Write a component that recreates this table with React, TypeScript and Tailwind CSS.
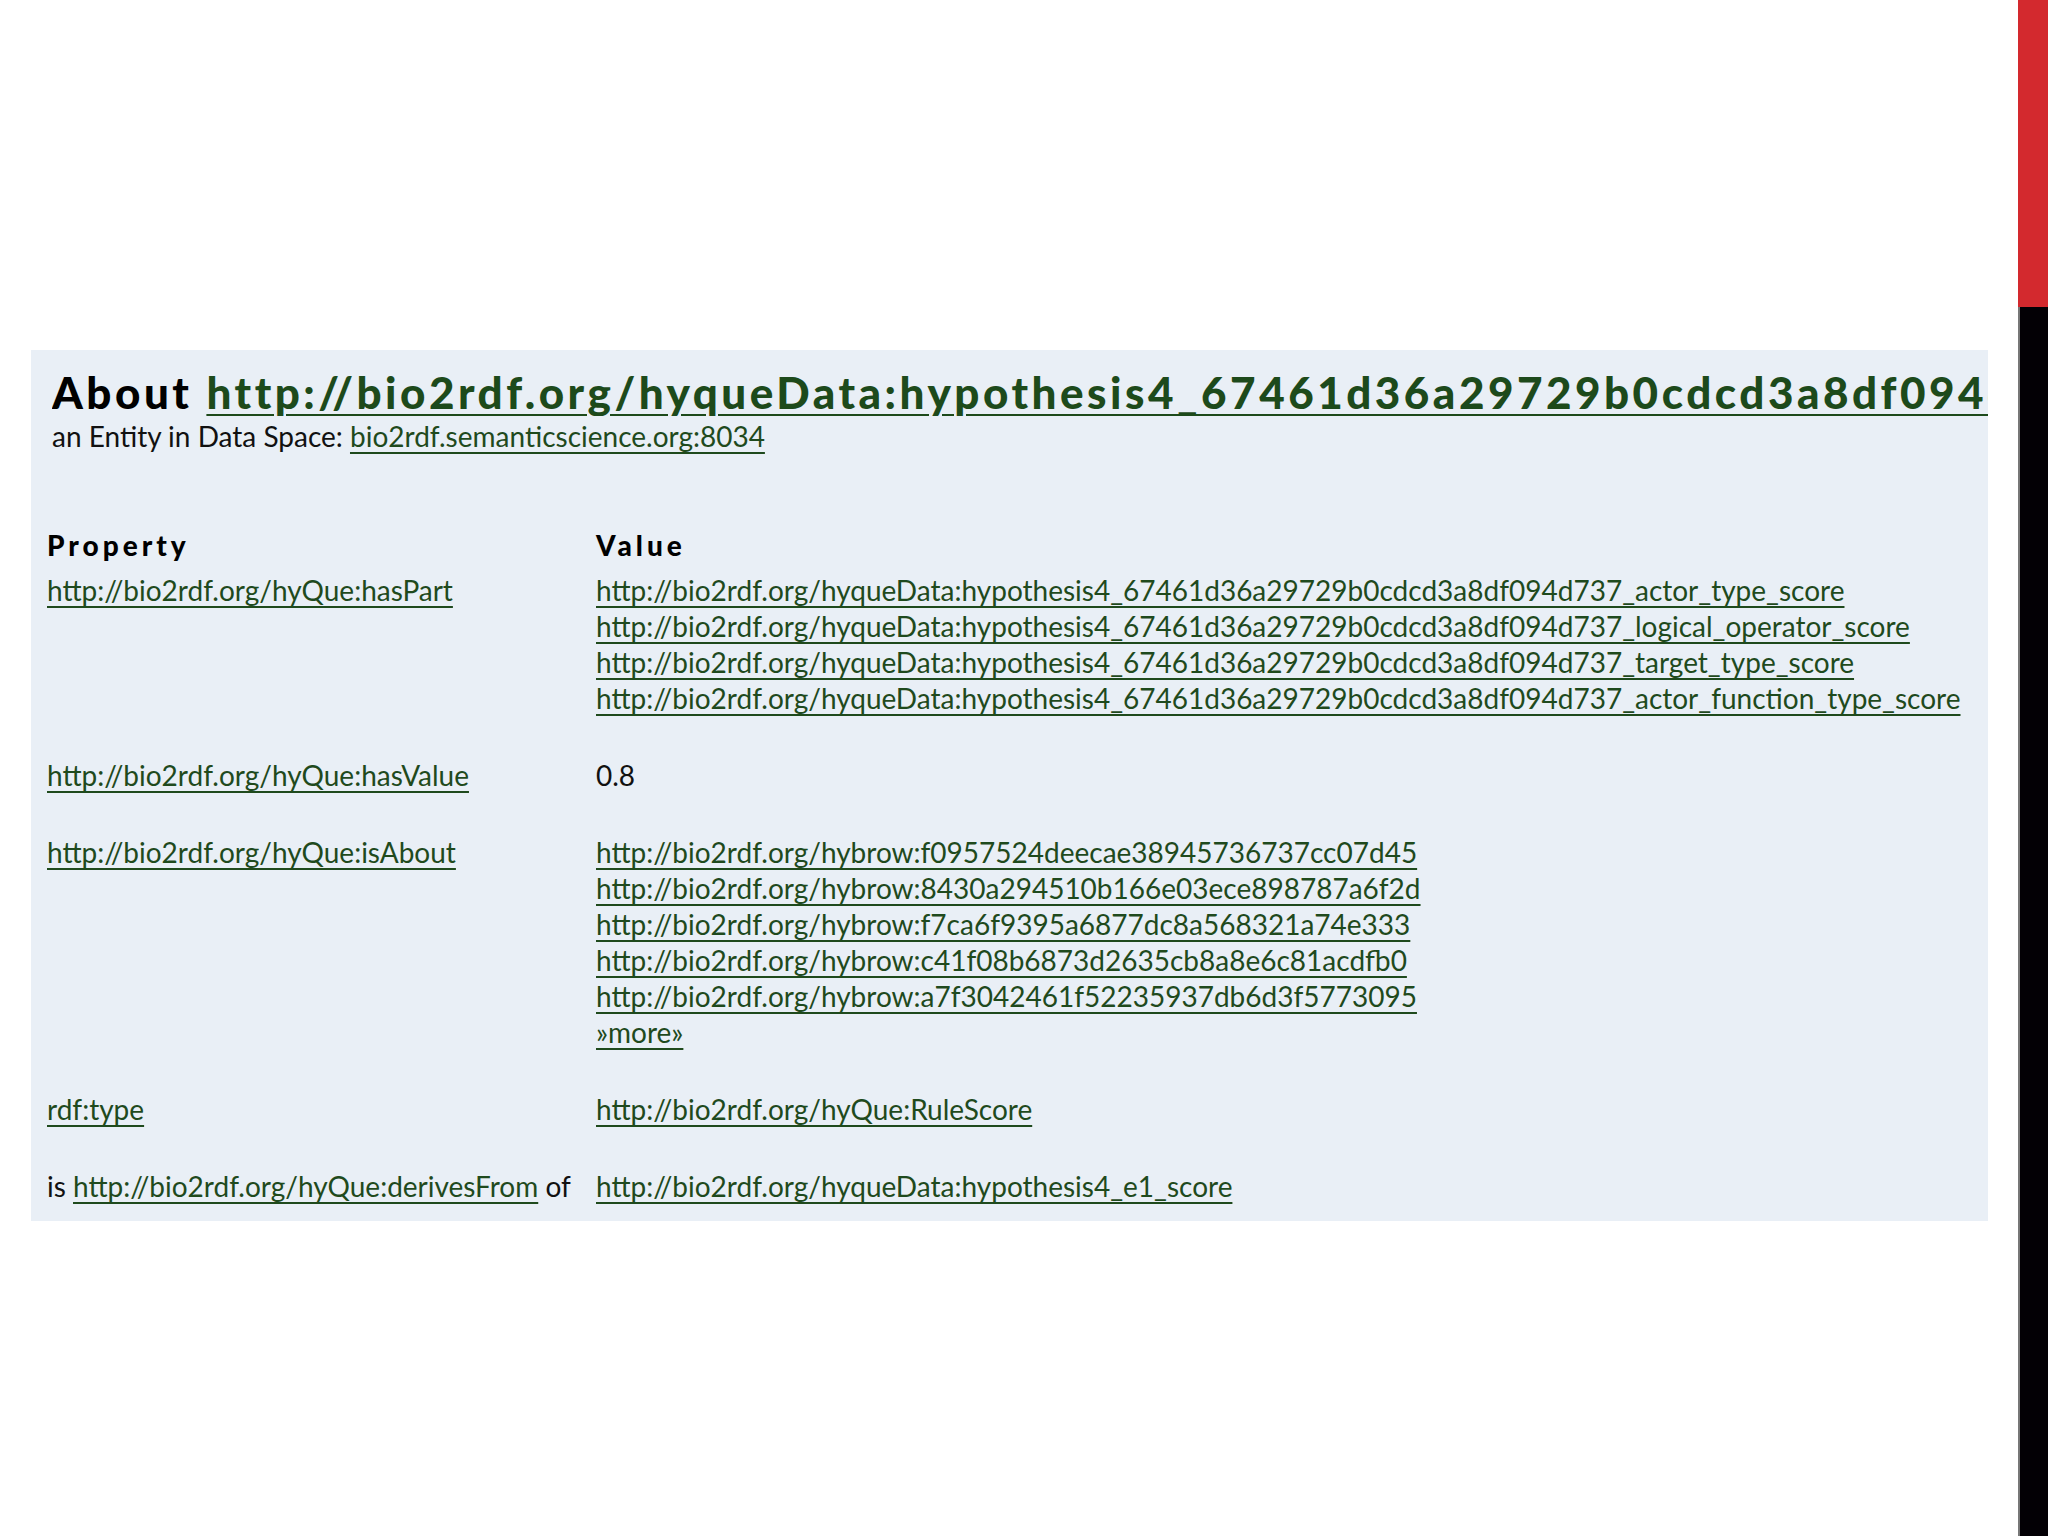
const font = { fontFamily: 'Lato, "Open Sans", sans-serif' }

const base = 'http://bio2rdf.org/hyqueData:hypothesis4_67461d36a29729b0cdcd3a8df094d737_'

const partValues = [
  base + 'actor_type_score',
  base + 'logical_operator_score',
  base + 'target_type_score',
  base + 'actor_function_type_score',
]

const aboutValues = [
  'http://bio2rdf.org/hybrow:f0957524deecae38945736737cc07d45',
  'http://bio2rdf.org/hybrow:8430a294510b166e03ece898787a6f2d',
  'http://bio2rdf.org/hybrow:f7ca6f9395a6877dc8a568321a74e333',
  'http://bio2rdf.org/hybrow:c41f08b6873d2635cb8a8e6c81acdfb0',
  'http://bio2rdf.org/hybrow:a7f3042461f52235937db6d3f5773095',
]

function Link({ children }: { children: React.ReactNode }) {
  return (
    <a className="text-[#1f4a1d] underline decoration-2 underline-offset-[5px] decoration-[#1f4a1d]">
      {children}
    </a>
  )
}

function Row({ prop, values }: { prop: React.ReactNode; values: React.ReactNode[] }) {
  return (
    <div className="flex">
      <div className="w-[549px] shrink-0 whitespace-nowrap">{prop}</div>
      <div className="flex flex-col whitespace-nowrap">
        {values.map((v, i) => (
          <div key={i}>{v}</div>
        ))}
      </div>
    </div>
  )
}

export default function App() {
  return (
    <div className="flex min-h-[1536px] bg-white" style={font}>
      <div className="min-w-0 flex-1 pt-[350px] pl-[31px] pr-[30px]">
        <div className="h-[871px] overflow-hidden bg-[#e9eff6] pl-[16px] text-[28px] leading-[36px] text-[#111]">
          {/* heading, cut at the panel edge like the source page */}
          <div className="mt-[18px] ml-[5px] overflow-hidden whitespace-nowrap text-[44px] leading-[48px] font-black tracking-[3.5px] text-black">
            About{' '}
            <a className="text-[#1d4a1b] underline decoration-[3px] underline-offset-[5px]">
              http://bio2rdf.org/hyqueData:hypothesis4_67461d36a29729b0cdcd3a8df094d737_logical_operator_score
            </a>
          </div>
          <div className="ml-[5px] mt-[2px]">
            an Entity in Data Space: <Link>bio2rdf.semanticscience.org:8034</Link>
          </div>

          <div className="mt-[73px] flex flex-col gap-[41px]">
            <div>
              <div className="mb-[9px] flex font-black tracking-[4px] text-black">
                <div className="w-[549px]">Property</div>
                <div>Value</div>
              </div>
              <Row
                prop={<Link>http://bio2rdf.org/hyQue:hasPart</Link>}
                values={partValues.map((v) => <Link key={v}>{v}</Link>)}
              />
            </div>
            <Row prop={<Link>http://bio2rdf.org/hyQue:hasValue</Link>} values={['0.8']} />
            <Row
              prop={<Link>http://bio2rdf.org/hyQue:isAbout</Link>}
              values={[...aboutValues.map((v) => <Link key={v}>{v}</Link>), <Link key="more">»more»</Link>]}
            />
            <Row
              prop={<Link>rdf:type</Link>}
              values={[<Link key="t">http://bio2rdf.org/hyQue:RuleScore</Link>]}
            />
            <Row
              prop={
                <span>
                  is <Link>http://bio2rdf.org/hyQue:derivesFrom</Link> of
                </span>
              }
              values={[<Link key="e">http://bio2rdf.org/hyqueData:hypothesis4_e1_score</Link>]}
            />
          </div>
        </div>
      </div>
      <div className="flex w-[30px] shrink-0 flex-col">
        <div className="h-[307px] bg-[#d3292e]" />
        <div className="flex-1 border-l-2 border-[#777] bg-[#030005]" />
      </div>
    </div>
  )
}
